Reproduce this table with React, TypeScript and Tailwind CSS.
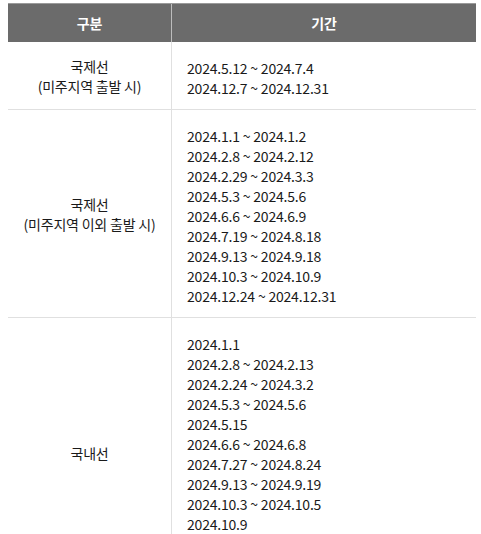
const rows = [
  {
    label: ['국제선', '(미주지역 출발 시)'],
    dates: ['2024.5.12 ~ 2024.7.4', '2024.12.7 ~ 2024.12.31'],
  },
  {
    label: ['국제선', '(미주지역 이외 출발 시)'],
    dates: [
      '2024.1.1 ~ 2024.1.2',
      '2024.2.8 ~ 2024.2.12',
      '2024.2.29 ~ 2024.3.3',
      '2024.5.3 ~ 2024.5.6',
      '2024.6.6 ~ 2024.6.9',
      '2024.7.19 ~ 2024.8.18',
      '2024.9.13 ~ 2024.9.18',
      '2024.10.3 ~ 2024.10.9',
      '2024.12.24 ~ 2024.12.31',
    ],
  },
  {
    label: ['국내선'],
    dates: [
      '2024.1.1',
      '2024.2.8 ~ 2024.2.13',
      '2024.2.24 ~ 2024.3.2',
      '2024.5.3 ~ 2024.5.6',
      '2024.5.15',
      '2024.6.6 ~ 2024.6.8',
      '2024.7.27 ~ 2024.8.24',
      '2024.9.13 ~ 2024.9.19',
      '2024.10.3 ~ 2024.10.5',
      '2024.10.9',
    ],
  },
]

export default function App() {
  return (
    <div className="bg-white pt-[3px] pl-[8px] h-[534px] overflow-hidden font-['Noto_Sans_CJK_KR',sans-serif] text-[14px] text-[#1a1a1a] tracking-[-0.2px]">
      <div className="w-[468px]">
        {/* Header */}
        <div className="flex h-[39px] bg-[#6b6b6b] border-t border-[#9a9a9a] text-white font-bold">
          <div className="w-[164px] flex items-center justify-center border-r border-[#bdbdbd]">구분</div>
          <div className="flex-1 flex items-center justify-center">기간</div>
        </div>

        {rows.map((row, i) => (
          <div
            key={i}
            className={`flex border-b border-[#e0e0e0] ${i === rows.length - 1 ? 'min-h-[270px]' : ''}`}
          >
            <div className="w-[164px] flex flex-col items-center justify-center border-r border-[#e0e0e0] leading-[20px] text-center">
              {row.label.map((l, j) => (
                <div key={j}>{l}</div>
              ))}
            </div>
            <div className="flex-1 pl-[15px] pt-[16px] pb-[11px] leading-[20px]">
              {row.dates.map((d, j) => (
                <div key={j}>{d}</div>
              ))}
            </div>
          </div>
        ))}
      </div>
    </div>
  )
}
